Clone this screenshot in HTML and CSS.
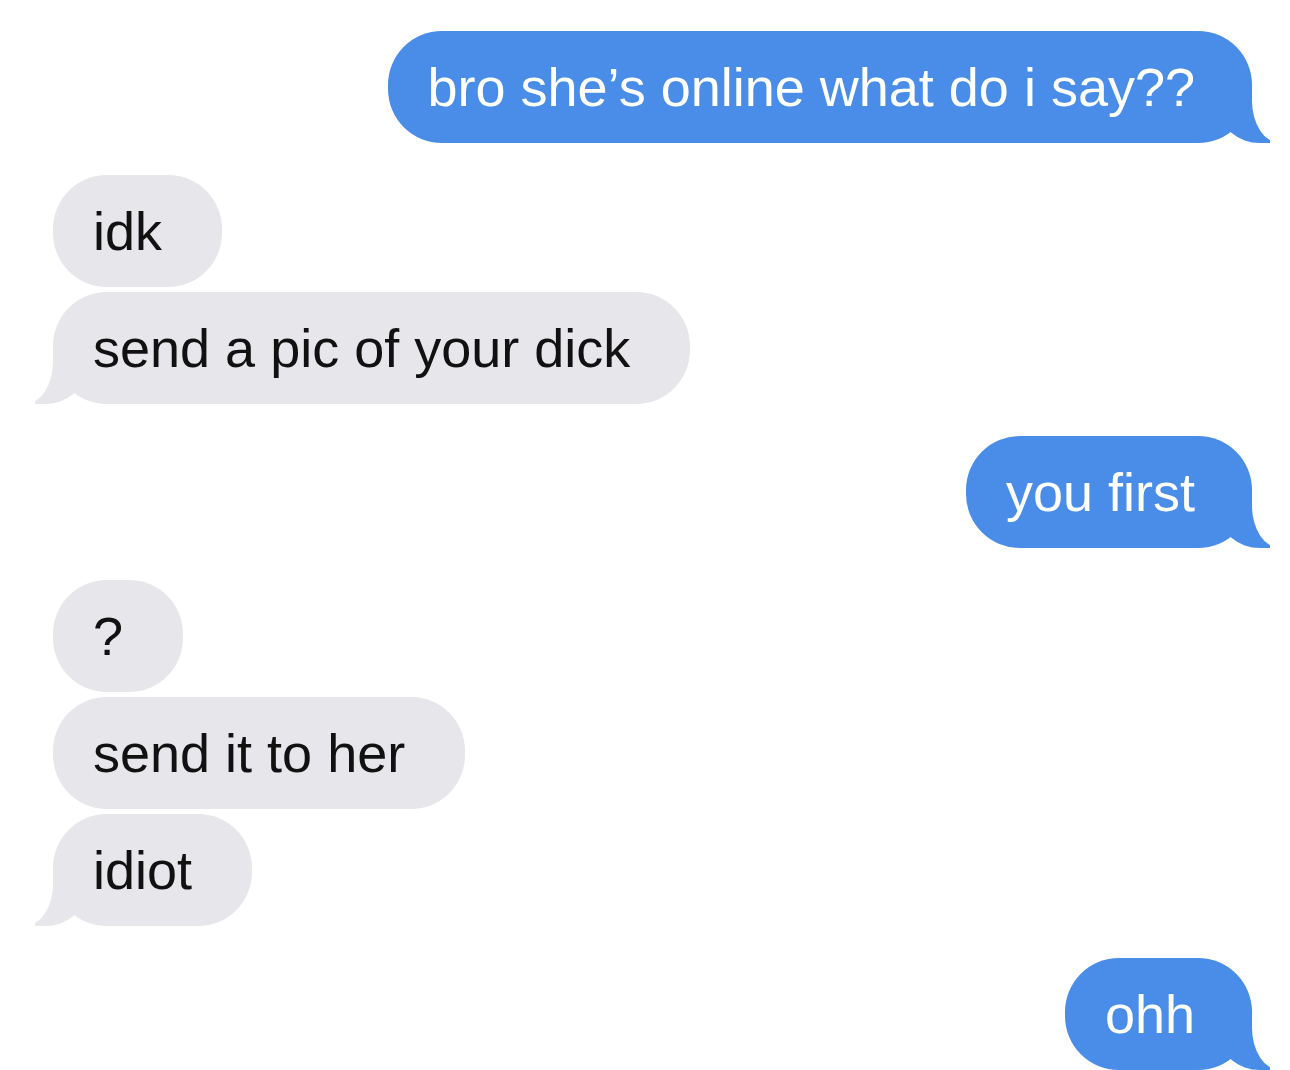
FILE: index.html
```html
<!DOCTYPE html>
<html lang="en">
<head>
<meta charset="utf-8">
<title>Messages</title>
<link rel="stylesheet" href="styles.css">
</head>
<body>
<main class="chat">
  <div class="bubble sent tail">bro she’s online what do i say??</div>
  <div class="bubble recv group-start">idk</div>
  <div class="bubble recv tail grouped">send a pic of your dick</div>
  <div class="bubble sent tail group-start">you first</div>
  <div class="bubble recv group-start">?</div>
  <div class="bubble recv grouped">send it to her</div>
  <div class="bubble recv tail grouped">idiot</div>
  <div class="bubble sent tail group-start">ohh</div>
</main>
</body>
</html>
```

FILE: styles.css
```css
html, body {
  margin: 0;
  padding: 0;
  background: #ffffff;
  overflow: hidden;
}

.chat {
  display: flex;
  flex-direction: column;
  align-items: flex-start;
  padding: 31px 38px 0 53px;
  font-family: "Liberation Sans", Arial, sans-serif;
  font-size: 54px;
}

.bubble {
  position: relative;
  z-index: 0;
  line-height: 62px;
  padding: 25px 60px 25px 40px;
  border-radius: 54px;
  white-space: nowrap;
}

.group-start {
  margin-top: 32px;
}

.grouped {
  margin-top: 5px;
}

.sent {
  align-self: flex-end;
  background: #4a8de8;
  color: #ffffff;
  padding-right: 57px;
}

.recv {
  background: #e6e6eb;
  color: #111111;
}

.tail::before,
.tail::after {
  content: "";
  position: absolute;
  bottom: 0;
  height: 60px;
  z-index: -1;
}

.sent.tail::before {
  right: -18px;
  width: 50px;
  background: #4a8de8;
  border-bottom-left-radius: 40px 34px;
}

.sent.tail::after {
  right: -60px;
  width: 60px;
  background: #ffffff;
  border-bottom-left-radius: 28px 42px;
}

.recv.tail::before {
  left: -18px;
  width: 50px;
  background: #e6e6eb;
  border-bottom-right-radius: 40px 34px;
}

.recv.tail::after {
  left: -60px;
  width: 60px;
  background: #ffffff;
  border-bottom-right-radius: 28px 42px;
}
```
